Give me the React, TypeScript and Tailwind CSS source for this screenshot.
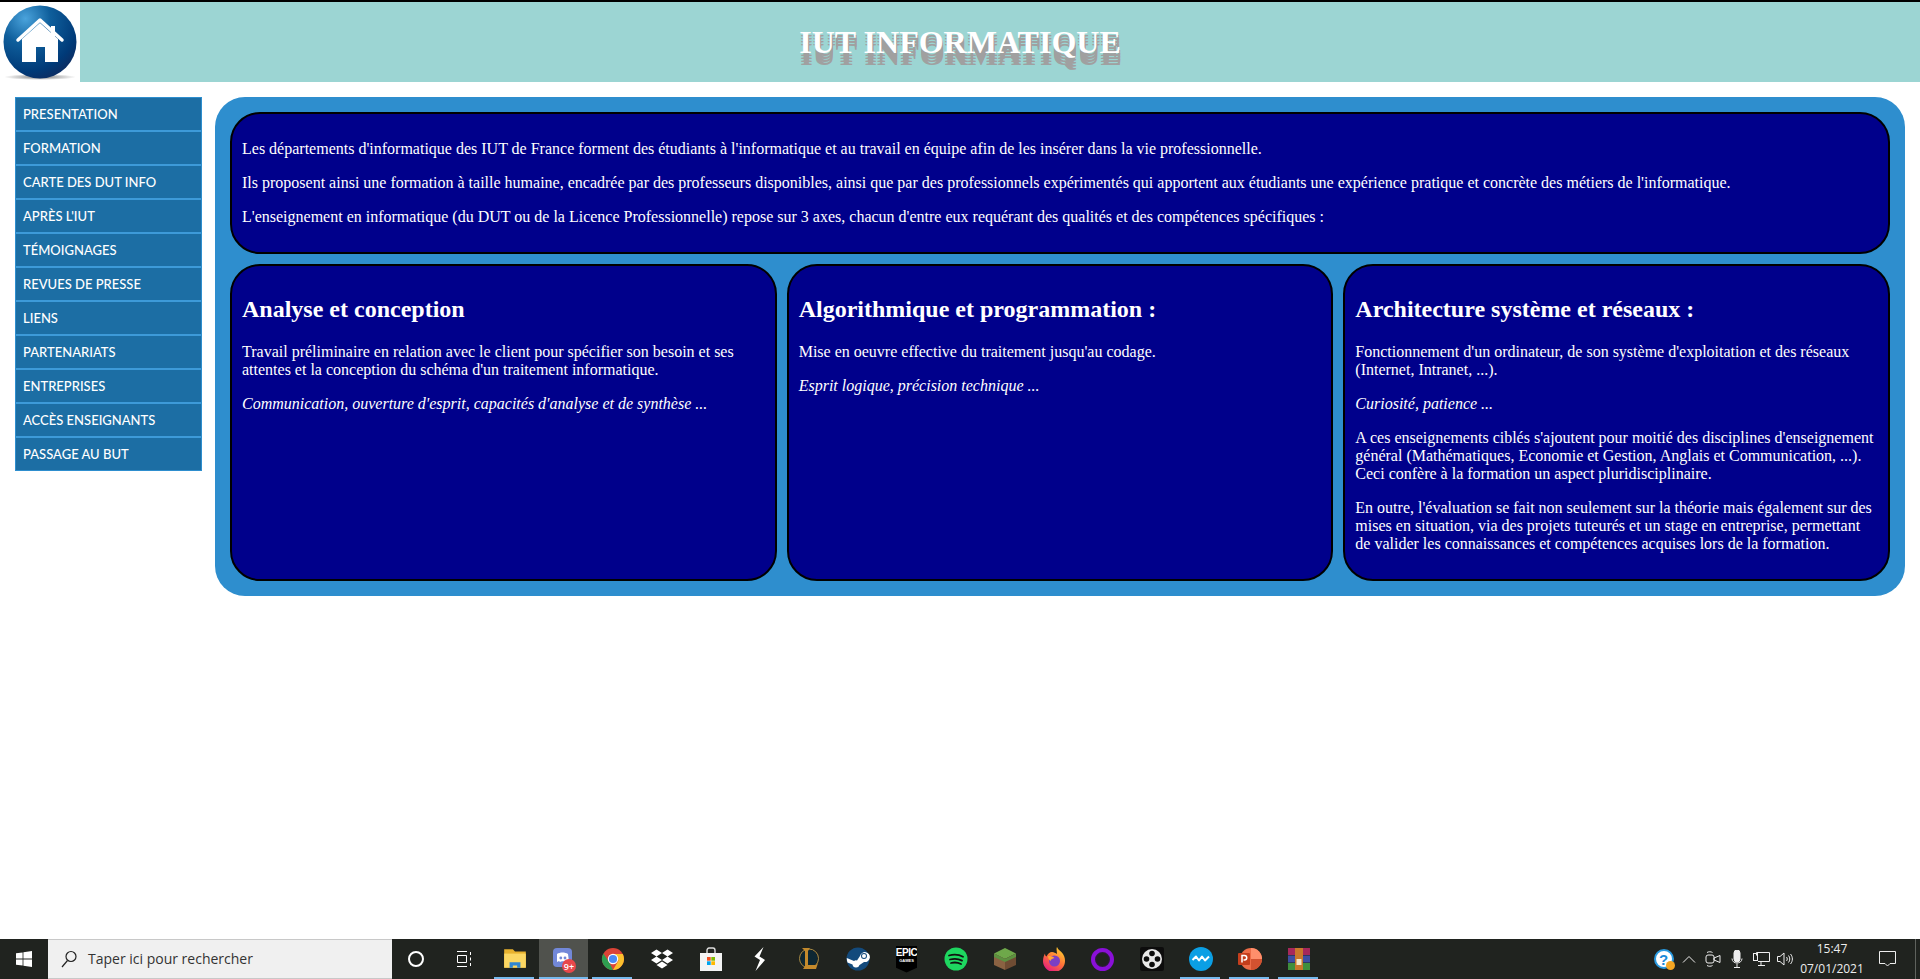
const menuItems = [
  "PRESENTATION",
  "FORMATION",
  "CARTE DES DUT INFO",
  "APRÈS L'IUT",
  "TÉMOIGNAGES",
  "REVUES DE PRESSE",
  "LIENS",
  "PARTENARIATS",
  "ENTREPRISES",
  "ACCÈS ENSEIGNANTS",
  "PASSAGE AU BUT",
];

function HomeLogo() {
  return (
    <svg width="80" height="80" viewBox="0 0 80 80" className="block">
      <defs>
        <radialGradient id="ball" cx="30%" cy="18%" r="85%">
          <stop offset="0" stopColor="#4aa3dc" />
          <stop offset="0.4" stopColor="#0f5f9c" />
          <stop offset="0.85" stopColor="#003a78" />
          <stop offset="1" stopColor="#0a2f66" />
        </radialGradient>
        <radialGradient id="floor">
          <stop offset="0" stopColor="#777" />
          <stop offset="1" stopColor="#fff" />
        </radialGradient>
      </defs>
      <ellipse cx="40" cy="75" rx="36" ry="3" fill="url(#floor)" />
      <circle cx="40" cy="40" r="36.5" fill="url(#ball)" />
      <path d="M51 24h4v12h-4z" fill="#fff" />
      <path d="M22 37 40 21l18 16v23H45V45h-9v15H22z" fill="#fff" />
      <path d="M18 38 40 18l22 20" fill="none" stroke="#fff" strokeWidth="3.5" strokeLinecap="round" strokeLinejoin="round" />
    </svg>
  );
}

function Sidebar() {
  return (
    <ul className="flex w-[187px] shrink-0 flex-col gap-[2px] self-start border border-[#2e8ece] bg-[#3d9ad8]">
      {menuItems.map((item) => (
        <li
          key={item}
          className="flex h-[32px] items-center bg-[#1c6ea4] px-[7px] font-['Lato',sans-serif] text-[13px] font-medium text-white"
        >
          {item}
        </li>
      ))}
    </ul>
  );
}

function Card({ title, children }: { title: string; children: React.ReactNode }) {
  return (
    <section className="rounded-[30px] border-2 border-black bg-[#00008b] p-[10px] text-white">
      <h2 className="my-[20px] text-[24px] leading-[27px] font-bold">{title}</h2>
      {children}
    </section>
  );
}

function TaskSlot({ under, active, children }: { under?: boolean; active?: boolean; children: React.ReactNode }) {
  return (
    <div className={active ? "relative flex h-full w-[49px] items-center justify-center bg-[#50524d]" : "relative flex h-full w-[49px] items-center justify-center"}>
      {children}
      {under && (
        <span className={active ? "absolute right-0 bottom-0 left-0 h-[2px] bg-[#76b9ed]" : "absolute right-[5px] bottom-0 left-[4px] h-[2px] bg-[#76b9ed]"} />
      )}
    </div>
  );
}

function Tray({ w, children }: { w: string; children: React.ReactNode }) {
  return <div className={`flex h-full items-center justify-center ${w}`}>{children}</div>;
}

function Taskbar() {
  return (
    <footer className="mt-auto flex h-[40px] shrink-0 items-center bg-[#20231f] font-['Open_Sans',sans-serif] text-white">
      <div className="flex h-full w-[48px] items-center justify-center">
        <svg width="16" height="16" viewBox="0 0 16 16" fill="#fff">
          <path d="M0 2.3 6.6 1.4v6.2H0zM7.4 1.3 16 0v7.6H7.4zM0 8.4h6.6v6.2L0 13.7zM7.4 8.4H16V16l-8.6-1.3z" />
        </svg>
      </div>
      <div className="flex h-full w-[344px] items-center border-y border-[#c8c8c8] bg-[#f0f0f0] pl-[13px] text-[#333]">
        <svg width="16" height="18" viewBox="0 0 16 18" fill="none" stroke="#222" strokeWidth="1.2">
          <circle cx="10" cy="6.5" r="5" />
          <path d="M6.5 10.5 1 17" />
        </svg>
        <span className="ml-[11px] text-[14px]">Taper ici pour rechercher</span>
      </div>
      <div className="flex h-full w-[48px] items-center justify-center">
        <span className="h-[16px] w-[16px] rounded-full border-2 border-white" />
      </div>
      <div className="mr-[2px] flex h-full w-[48px] items-center justify-center">
        <svg width="16" height="16" viewBox="0 0 16 16" fill="none" stroke="#fff" strokeWidth="1">
          <path d="M1 .5h10M1 15.5h10M1.5 4.5h9v7h-9zM14.5 1v3M14.5 6.5v3M14.5 12v3" />
        </svg>
      </div>

      <TaskSlot under>
        <svg width="26" height="26" viewBox="0 0 24 24">
          <path d="M2 3h8l2 2h10v15H2z" fill="#e8b22e" />
          <path d="M2 7h20v13H2z" fill="#fbd763" />
          <path d="M7 20v-5h10v5h-3v-2h-4v2z" fill="#2f86d2" />
        </svg>
      </TaskSlot>
      <TaskSlot under active>
        <svg width="24" height="24" viewBox="0 0 24 24">
          <rect x="1" y="1" width="19" height="19" rx="4" fill="#7288d8" />
          <path d="M5 7c3-2 8-2 11 0l1 8-2-1-1 1c-1-1-5-1-6 0l-1-1-2 1z" fill="#fff" />
          <circle cx="8.8" cy="11" r="1.4" fill="#7288d8" />
          <circle cx="13" cy="11" r="1.4" fill="#7288d8" />
        </svg>
        <span className="absolute top-[20px] left-[23px] flex h-[14px] w-[14px] items-center justify-center rounded-full bg-[#e8474b] text-[9px] leading-none font-semibold text-white">
          9+
        </span>
      </TaskSlot>
      <TaskSlot under>
        <svg width="24" height="24" viewBox="0 0 24 24">
          <circle cx="12" cy="12" r="11" fill="#db4437" />
          <path d="M12 23A11 11 0 0 1 2.4 6.5L8 15l4 8z" fill="#2e9e50" />
          <path d="M23 12a11 11 0 0 1-11 11l5.500-9.500L12 7h9.800c.8 1.500 1.200 3.200 1.200 5z" fill="#fbc02d" />
          <circle cx="12" cy="12" r="5.200" fill="#fff" />
          <circle cx="12" cy="12" r="4.100" fill="#4a8af4" />
        </svg>
      </TaskSlot>
      <TaskSlot>
        <svg width="24" height="24" viewBox="0 0 24 24" fill="#fff">
          <path d="m6.500 2.500 5.500 3.500-5.500 3.500L1 6zM17.500 2.500 23 6l-5.500 3.500L12 6zM6.500 9.500l5.500 3.500-5.500 3.500L1 13zM17.500 9.500 23 13l-5.500 3.500L12 13zM12 14.500l5.500 3.500-5.500 3.500L6.500 18z" />
        </svg>
      </TaskSlot>
      <TaskSlot>
        <svg width="24" height="24" viewBox="0 0 24 24">
          <path d="M8 7V3.500C8 2 9 1 10 1h4c1 0 2 1 2 2.500V7" fill="none" stroke="#ddd" strokeWidth="1.400" />
          <rect x="1" y="6" width="22" height="18" fill="#f4f4f4" />
          <path d="M8 10h3.700v3.700H8z" fill="#f25022" />
          <path d="M12.300 10H16v3.700h-3.700z" fill="#7fba00" />
          <path d="M8 14.300h3.700V18H8z" fill="#00a4ef" />
          <path d="M12.300 14.300H16V18h-3.700z" fill="#ffb900" />
        </svg>
      </TaskSlot>
      <TaskSlot>
        <svg width="24" height="24" viewBox="0 0 24 24" fill="#fff">
          <path d="M15.500 0 6.500 9.500l5.500 3.500-4.500 11L17 13l-5.500-3.500z" />
        </svg>
      </TaskSlot>
      <TaskSlot>
        <svg width="24" height="24" viewBox="0 0 24 24" fill="none">
          <circle cx="12" cy="11.500" r="9.500" stroke="#a88b45" strokeWidth="1" />
          <circle cx="12" cy="11.500" r="8.500" fill="#0d2733" />
          <path d="M5 1h8l-2 3v14h8l2-2-2 6H6l2-3V4z" fill="#c48a2c" />
        </svg>
      </TaskSlot>
      <TaskSlot>
        <svg width="24" height="24" viewBox="0 0 24 24">
          <circle cx="12" cy="12" r="11.500" fill="#134a7c" />
          <path d="M.800 11 8 14a3.500 3.500 0 0 1 3-.500L14 9a5 5 0 1 1 4 6l-4.500 3a3.600 3.600 0 0 1-7-.500L1.500 15.500C1 14 .700 12.500.800 11z" fill="#fff" />
          <circle cx="18" cy="9" r="3" fill="#134a7c" />
          <circle cx="18" cy="9" r="2" fill="#fff" />
        </svg>
      </TaskSlot>
      <TaskSlot>
        <div className="flex h-[27px] w-[21px] flex-col items-center bg-black pt-[2px] font-['Liberation_Sans',sans-serif] leading-none text-white [clip-path:polygon(0_0,100%_0,100%_82%,50%_100%,0_82%)]">
          <span className="text-[10px] font-bold tracking-[-0.5px]">EPIC</span>
          <span className="mt-[1px] text-[4px] font-bold">GAMES</span>
        </div>
      </TaskSlot>
      <TaskSlot>
        <svg width="24" height="24" viewBox="0 0 24 24">
          <circle cx="12" cy="12" r="11.500" fill="#1ed760" />
          <path d="M5 8.500c4.500-1.300 10-1 14 1.300M6 12.500c4-1.100 8.500-.8 12 1.100M7 16c3.300-.8 7-.6 10 1" fill="none" stroke="#111" strokeWidth="1.800" strokeLinecap="round" />
        </svg>
      </TaskSlot>
      <TaskSlot>
        <svg width="24" height="24" viewBox="0 0 24 24">
          <path d="M12 1 23 6.500 12 12 1 6.500z" fill="#6ea84a" />
          <path d="M1 6.500 12 12v11L1 18z" fill="#8a6242" />
          <path d="M23 6.500 12 12v11l11-5z" fill="#6f4c33" />
          <path d="M1 6.500 12 12v3L1 10zM23 6.500 12 12v3l11-5z" fill="#5c9140" />
        </svg>
      </TaskSlot>
      <TaskSlot>
        <svg width="24" height="24" viewBox="0 0 24 24">
          <defs>
            <linearGradient id="fox" x1="0.800" y1="0" x2="0.200" y2="1">
              <stop offset="0" stopColor="#ffd52e" />
              <stop offset="0.5" stopColor="#ff7139" />
              <stop offset="1" stopColor="#e31587" />
            </linearGradient>
          </defs>
          <path d="M15 0c1 3 4 4 6 7 2 3 2 6 2 7a11 11 0 0 1-22 0C1 11 2 8 3 6.500c0 1.500.5 2.500 1.500 3C5.500 7 8 5 10 5c2 0 3.500 1 5 2 0-2.500-1-5 0-7z" fill="url(#fox)" />
          <circle cx="12.500" cy="14" r="5.500" fill="#7a3fc4" />
          <path d="M6 9c3 0 5 .5 6.500 2-2 .5-3.500 1-4 3C7 13 6 11 6 9z" fill="#ffa436" />
        </svg>
      </TaskSlot>
      <TaskSlot>
        <span className="h-[23px] w-[23px] rounded-full border-[4px] border-[#8a10d8] shadow-[inset_0_0_2px_#4b0a85]" />
      </TaskSlot>
      <TaskSlot>
        <svg width="24" height="24" viewBox="0 0 24 24">
          <rect width="24" height="24" rx="2" fill="#0c0c0c" />
          <circle cx="12" cy="12" r="10" fill="#e8e8e8" />
          <g fill="#0c0c0c">
            <circle cx="12" cy="6.500" r="2.800" />
            <circle cx="12" cy="17.500" r="2.800" />
            <circle cx="6.500" cy="12" r="2.800" />
            <circle cx="17.500" cy="12" r="2.800" />
          </g>
        </svg>
      </TaskSlot>
      <TaskSlot under>
        <svg width="24" height="24" viewBox="0 0 24 24">
          <circle cx="12" cy="12" r="12" fill="#0b9fe4" />
          <path d="M3.500 13 7 9.500l3 4 3-4 3 4 4-4" fill="none" stroke="#fff" strokeWidth="2" strokeLinejoin="round" />
        </svg>
      </TaskSlot>
      <TaskSlot under>
        <svg width="24" height="24" viewBox="0 0 24 24">
          <circle cx="13" cy="12" r="11" fill="#ed6c47" />
          <path d="M13 1a11 11 0 0 1 11 11H13z" fill="#ff8f6b" />
          <path d="M13 12h11a11 11 0 0 1-11 11z" fill="#d35230" />
          <rect x="0" y="6" width="12" height="12" rx="1" fill="#c43e1c" />
          <path d="M4 15.500v-7h2.500a2.200 2.200 0 0 1 0 4.500H5.500" fill="none" stroke="#fff" strokeWidth="1.500" />
        </svg>
      </TaskSlot>
      <TaskSlot under>
        <svg width="24" height="24" viewBox="0 0 24 24">
          <rect x="1" y="1" width="22" height="7" fill="#a6285b" />
          <rect x="1" y="8.500" width="22" height="7" fill="#3d4ea3" />
          <rect x="1" y="16" width="22" height="7" fill="#3f8f3d" />
          <rect x="8" y="1" width="8" height="22" fill="#c9782c" />
          <rect x="9.500" y="12" width="5" height="6" fill="#f2e6c8" />
        </svg>
      </TaskSlot>

      <div className="ml-auto flex h-full items-center">
        <Tray w="w-[27px]">
          <div className="relative flex h-[20px] w-[20px] items-center justify-center rounded-full border-[2px] border-[#2a9ae0] bg-white font-['Liberation_Sans',sans-serif] text-[15px] leading-none font-bold text-[#1a8ad8]">
            ?
            <span className="absolute right-[-3px] bottom-[-3px] h-[9px] w-[9px] rounded-full bg-[#f5a623]" />
          </div>
        </Tray>
        <Tray w="w-[24px]">
          <svg width="14" height="8" viewBox="0 0 14 8" fill="none" stroke="#eee" strokeWidth="1">
            <path d="M1 7.500 7 1.500l6 6" />
          </svg>
        </Tray>
        <Tray w="w-[24px]">
          <svg width="16" height="18" viewBox="0 0 16 18" fill="none" stroke="#eee" strokeWidth="1">
            <path d="M2 2.500c1.500-1 4-1 5.500 0M2 15.500c1.500 1 4 1 5.500 0" />
            <rect x="1" y="5" width="8" height="8" rx="2" />
            <path d="m9 8 6-2.500v7L9 10z" />
          </svg>
        </Tray>
        <Tray w="w-[24px]">
          <svg width="14" height="18" viewBox="0 0 14 18" fill="none" stroke="#eee" strokeWidth="1">
            <rect x="4" y="0" width="6" height="12" rx="3" fill="#eee" />
            <path d="M2 8.500c0 6 10 6 10 0M7 13.500V17M4 17.500h6" />
          </svg>
        </Tray>
        <Tray w="w-[24px]">
          <svg width="17" height="14" viewBox="0 0 17 14" fill="none" stroke="#eee" strokeWidth="1">
            <path d="M3.500 3.500V.5h13v9H5M8 9.500v3.500M5 13.500h7" />
            <rect x=".5" y="1.500" width="4" height="7" />
          </svg>
        </Tray>
        <Tray w="w-[24px]">
          <svg width="17" height="14" viewBox="0 0 17 14" fill="none" stroke="#eee" strokeWidth="1">
            <path d="M.5 4.500h2.500L7 1v12L3 9.500H.5zM9.500 5c1 1.200 1 2.800 0 4M11.500 3.500c1.700 2 1.700 5 0 7M13.500 2c2.500 3 2.500 7 0 10" />
          </svg>
        </Tray>
        <div className="flex h-full w-[70px] flex-col items-center justify-center text-[12px] leading-[20px] text-[#eee]">
          <span>15:47</span>
          <span>07/01/2021</span>
        </div>
        <Tray w="w-[40px]">
          <svg width="17" height="16" viewBox="0 0 17 16" fill="none" stroke="#eee" strokeWidth="1">
            <path d="M.5.500h16v12h-5.500L8.500 15 6 12.500H.5z" />
          </svg>
        </Tray>
        <div className="ml-[8px] h-full w-[5px] border-l border-[#5f625d]" />
      </div>
    </footer>
  );
}

export default function App() {
  return (
    <div className="flex h-screen flex-col overflow-hidden bg-white font-['Liberation_Serif',serif] text-[16px] leading-[18px]">
      <div className="h-[2px] shrink-0 bg-black" />
      <header className="flex h-[80px] shrink-0">
        <HomeLogo />
        <div className="flex flex-1 items-center justify-center bg-[#9cd5d3] pr-[80px]">
          <h1 className="text-[32px] leading-[37px] font-bold text-white [text-shadow:1px_3px_0_#a0a0a0,1px_6px_0_#a0a0a0,1px_9px_0_#a0a0a0,1px_12px_0_#a0a0a0]">
            IUT INFORMATIQUE
          </h1>
        </div>
      </header>

      <div className="mt-[15px] flex gap-[13px] pr-[15px] pl-[15px]">
        <Sidebar />
        <main className="flex flex-1 flex-col gap-[10px] rounded-[30px] bg-[#2e8ece] p-[15px]">
          <section className="rounded-[30px] border-2 border-black bg-[#00008b] p-[10px] text-white">
            <p className="my-[16px]">
              Les départements d'informatique des IUT de France forment des étudiants à l'informatique et au travail en équipe afin de les insérer dans la vie professionnelle.
            </p>
            <p className="my-[16px]">
              Ils proposent ainsi une formation à taille humaine, encadrée par des professeurs disponibles, ainsi que par des professionnels expérimentés qui apportent aux étudiants une expérience pratique et concrète des métiers de l'informatique.
            </p>
            <p className="my-[16px]">
              L'enseignement en informatique (du DUT ou de la Licence Professionnelle) repose sur 3 axes, chacun d'entre eux requérant des qualités et des compétences spécifiques :
            </p>
          </section>
          <div className="grid grid-cols-3 gap-[10px]">
            <Card title="Analyse et conception">
              <p className="my-[16px]">
                Travail préliminaire en relation avec le client pour spécifier son besoin et ses attentes et la conception du schéma d'un traitement informatique.
              </p>
              <p className="my-[16px] italic">Communication, ouverture d'esprit, capacités d'analyse et de synthèse ...</p>
            </Card>
            <Card title="Algorithmique et programmation :">
              <p className="my-[16px]">Mise en oeuvre effective du traitement jusqu'au codage.</p>
              <p className="my-[16px] italic">Esprit logique, précision technique ...</p>
            </Card>
            <Card title="Architecture système et réseaux :">
              <p className="my-[16px]">
                Fonctionnement d'un ordinateur, de son système d'exploitation et des réseaux (Internet, Intranet, ...).
              </p>
              <p className="my-[16px] italic">Curiosité, patience ...</p>
              <p className="my-[16px]">
                A ces enseignements ciblés s'ajoutent pour moitié des disciplines d'enseignement général (Mathématiques, Economie et Gestion, Anglais et Communication, ...). Ceci confère à la formation un aspect pluridisciplinaire.
              </p>
              <p className="my-[16px]">
                En outre, l'évaluation se fait non seulement sur la théorie mais également sur des mises en situation, via des projets tuteurés et un stage en entreprise, permettant de valider les connaissances et compétences acquises lors de la formation.
              </p>
            </Card>
          </div>
        </main>
      </div>

      <Taskbar />
    </div>
  );
}
